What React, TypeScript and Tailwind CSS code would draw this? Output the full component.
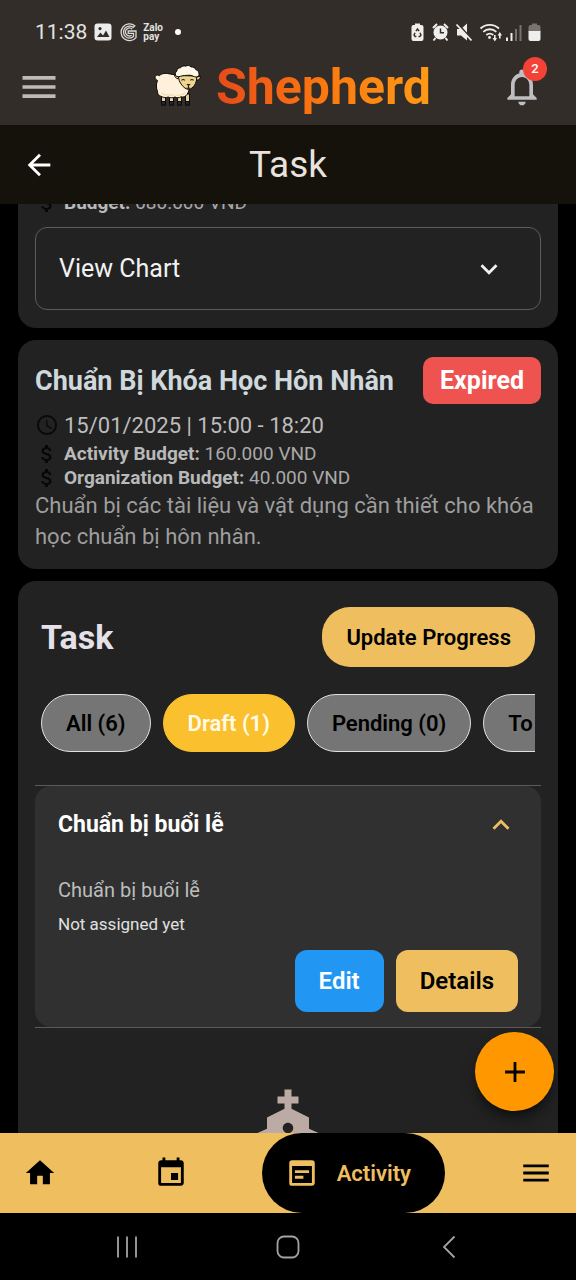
import type { ReactNode } from "react";
import {
  MdAccessTime,
  MdAdd,
  MdArrowBack,
  MdAttachMoney,
  MdChurch,
  MdEvent,
  MdExpandLess,
  MdExpandMore,
  MdHome,
  MdMenu,
  MdNotificationsNone,
  MdWysiwyg,
} from "react-icons/md";

function StatusBar() {
  return (
    <div className="flex h-[50px] items-end justify-between pr-[33px] pb-[6px] pl-[35px] text-[#e4e2e0]">
      <div className="flex h-6 items-center">
        <span className="text-[21px] leading-6">11:38</span>
        <svg className="ml-[7px] size-[18px]" viewBox="0 0 18 18">
          <rect x="0.5" y="0.5" width="17" height="17" rx="3" fill="#eeeceb" />
          <path d="M3 14l3.5-4.5 2.5 3 3-5 3.5 6.5z" fill="#322d28" />
          <circle cx="6" cy="5.6" r="1.6" fill="#322d28" />
        </svg>
        <svg className="ml-[7px] h-5 w-[18px]" viewBox="0 0 18 20" fill="none" stroke="#dcdad8" strokeWidth="1.3">
          <path d="M15.800 3.800A8.400 8.400 0 1 0 17 15.600V9H9.200v2.300h5.300v3.300a6 6 0 1 1-.3-9.200z" />
          <path d="M13.200 7.200a3.900 3.900 0 1 0-.6 6" />
        </svg>
        <span className="ml-[6px] flex flex-col text-[10px] leading-[9px] font-bold">
          <span>Zalo</span>
          <span>pay</span>
        </span>
        <span className="ml-3 size-[6px] rounded-full bg-white" />
      </div>
      <svg className="h-6 w-[132px]" viewBox="0 0 132 24" fill="#f0eeec">
        <path d="M4 3.5h5V5h1.500A2 2 0 0 1 12.500 7v12a2 2 0 0 1-2 2h-8a2 2 0 0 1-2-2V7a2 2 0 0 1 2-2H4z" />
        <g fill="none" stroke="#322d28" strokeWidth="1.400">
          <path d="M4.900 11.200l1.600-2.200 1.600 2.200M9 12.700l1 2.500-1.200 1.300H7.500M5.400 16.500H4.200L3 15.200l1-2.500" />
        </g>
        <circle cx="29.500" cy="12.500" r="7" />
        <path d="M22 8l4-4M37 8l-4-4M24.500 18l-2 2.500M34.500 18l2 2.500" stroke="#f0eeec" strokeWidth="2" />
        <path d="M29.500 8.500v4.300h3.500" fill="none" stroke="#322d28" strokeWidth="1.500" />
        <path d="M46 9h4l6-5.500v17L50 15.500h-4z" />
        <path d="M46.500 3.500l15 17" stroke="#322d28" strokeWidth="2" />
        <path d="M45.500 4.500l15 16" stroke="#f0eeec" strokeWidth="1.800" />
        <g fill="none" stroke="#f0eeec" strokeWidth="1.800">
          <path d="M69.500 8.500a13.500 13.500 0 0 1 18.500 0" />
          <path d="M72.300 11.800a9.500 9.500 0 0 1 13 0" />
          <path d="M75.300 15a5.500 5.500 0 0 1 7 0" />
        </g>
        <circle cx="78.500" cy="17.500" r="1.400" />
        <path d="M83 15h1.600v3h1.400l-2.200 3.500-2.200-3.500H83zM88 18.500h1.600v-3H91L88.800 12l-2.200 3.500H88z" />
        <path d="M95 17.500h2V21h-2zM99.500 13h2v8h-2z" />
        <path d="M104 9h2v12h-2zM108.500 5h2v16h-2z" fill="#77736f" />
        <path d="M121 3.500h5V5h1.500a2 2 0 0 1 2 2v5h-12V7a2 2 0 0 1 2-2h1.500z" fill="#77736f" />
        <path d="M117.500 11h12v8a2 2 0 0 1-2 2h-8a2 2 0 0 1-2-2z" />
      </svg>
    </div>
  );
}

function Sheep() {
  return (
    <svg className="h-[45px] w-[50px] shrink-0" viewBox="5 5 50 45">
      <g stroke="#0c0a0c" strokeWidth="1">
        <path d="M12.500 36h4v10h-4zM20.500 37h4v9h-4zM28.500 37h4v9h-4zM36.500 35h4v11h-4z" fill="#e6d092" />
        <path
          d="M12.500 42.500h4V46h-4zM20.500 42.500h4V46h-4zM28.500 42.500h4V46h-4zM36.500 42.500h4V46h-4z"
          fill="#262533"
        />
        <path
          d="M8.500 21.500c-2-.8-2.800-2.600-2.200-4.200.7-1.500 2.600-1.800 4-.6 2-2 5-2.700 8-2.200l9 1.500 13 8.500c.8 4-.2 8-2.300 11-1.500 2.200-4 3-6 2.300-2 1.200-4.300 1.200-6 .2-2 1-5 1-6.800 0-2 .8-4.800.8-6.700-.5-2.500-.4-4.200-2.600-4-5-1.400-3.500-1.500-7.500 0-11z"
          fill="#fdf1dc"
        />
        <path d="M31 17.500l-2.500-1.500-3-.2c.2 2 1.300 3.600 3.500 4zM47.500 18l4-.8c.2 2.400-1.500 4.200-4.300 4z" fill="#e9cf8a" />
        <path
          d="M29.500 16.500l17.800.5c.7 3.500 0 6.800-2 9.500-1.500 2-3.300 3.600-5.600 4-2.800-.4-5-2-6.700-4.300-2.400-2.600-3.600-6-3.500-9.700z"
          fill="#eed58e"
        />
        <path
          d="M27.500 17.500c-1.700-1.700-1.500-4.200.3-5.500.2-2 1.800-3.400 3.800-3.300 1.200-1.600 3.300-2.200 5-1.500 1.800-1.200 4.200-.8 5.500.7 2.200-.2 4 .9 4.600 2.600 2.200.7 3.600 2.800 3.300 5-.2 1.600-1.400 2.600-3 2.500-2.300-.2-3.600-1.400-5.300-1.700-2.300-.4-4 .2-6.200.2-2.800 0-5.200 1.800-8 1z"
          fill="#fff7e6"
        />
      </g>
      <path
        d="M12 33c4 3 8 2 11 2.500 5 1 9 .5 13.500-2.500-.4 2-2 3.600-4.500 3-2 1.400-4.500 1-6 .2-2.500 1.200-5 .8-7 0-3 .8-5.500.4-7-3.200z"
        fill="#f0dcb4"
      />
      <path
        d="M32.500 21.300c1-1 2.300-1 3.300 0M41.300 21.300c1-1 2.300-1 3.300 0M39.500 27v1.700M37.500 29c1.200.5 2.800.5 4 0"
        fill="none"
        stroke="#2b2116"
        strokeWidth="1.100"
      />
      <path d="M37.300 25h4.400l-2.200 2.200z" fill="#2b1c18" />
    </svg>
  );
}

function TopBar() {
  return (
    <header className="shrink-0 bg-[#322d28]">
      <StatusBar />
      <div className="flex h-[75px] items-center justify-between pr-8 pb-[2px] pl-[17px]">
        <button type="button" aria-label="Open menu" className="text-[#bdbab7]">
          <MdMenu className="size-11" />
        </button>
        <div className="flex items-center gap-3 pl-6">
          <Sheep />
          <span className="bg-linear-to-r from-[#e64a19] via-[#fb780f] to-[#ff9a16] bg-clip-text text-[50px] leading-[60px] font-bold text-transparent">
            Shepherd
          </span>
        </div>
        <button type="button" aria-label="Notifications" className="relative text-[#bfbfc1]">
          <MdNotificationsNone className="size-11" />
          <span className="absolute -top-2 -right-[3px] flex size-6 items-center justify-center rounded-full bg-[#f44336] text-[13px] leading-4 font-medium text-white">
            2
          </span>
        </button>
      </div>
    </header>
  );
}

function MoneyRow({ label, amount }: { label: string; amount: string }) {
  return (
    <div className="flex h-6 items-center gap-[5px] text-[19px] leading-6 text-[#a9a9a9]">
      <MdAttachMoney className="size-6 text-[#070707]" />
      <p>
        <strong className="font-bold text-[#b9b9b9]">{label}:</strong> {amount} VND
      </p>
    </div>
  );
}

function Card({ children, className }: { children: ReactNode; className: string }) {
  return <section className={`mx-[18px] bg-[#222222] ${className}`}>{children}</section>;
}

const filters = [
  { name: "All", count: 6 },
  { name: "Draft", count: 1 },
  { name: "Pending", count: 0 },
  { name: "To Do", count: 2 },
];

function Filters() {
  return (
    <div className="mt-[27px] flex gap-3 overflow-hidden">
      {filters.map((f) => (
        <button
          key={f.name}
          type="button"
          aria-pressed={f.name === "Draft"}
          className={
            f.name === "Draft"
              ? "h-[58px] shrink-0 rounded-full border border-[#fbc02d] bg-[#fbc02d] px-6 text-[22px] font-semibold text-[#fffbe8]"
              : "h-[58px] shrink-0 rounded-full border border-[#e0e0e0] bg-[#757575] px-6 text-[22px] font-semibold text-black"
          }
        >
          {f.name} ({f.count})
        </button>
      ))}
    </div>
  );
}

export default function App() {
  return (
    <div className="flex h-screen flex-col bg-black font-[Roboto,'Noto_Sans',sans-serif]">
      <TopBar />
      <div className="grid h-[79px] shrink-0 grid-cols-[1fr_auto_1fr] items-center bg-[#15110b] px-[22px]">
        <button type="button" aria-label="Back" className="justify-self-start text-white">
          <MdArrowBack className="size-[34px]" />
        </button>
        <h1 className="text-[37px] leading-[48px] text-[#e9e2dd]">Task</h1>
      </div>

      <div className="relative min-h-0 flex-1">
        <main className="h-full overflow-hidden">
          <Card className="-mt-[13px] rounded-b-[18px] px-[17px] pb-[18px]">
            <MoneyRow label="Budget" amount="680.000" />
            <button
              type="button"
              aria-expanded={false}
              className="mt-3 flex h-[83px] w-full items-center justify-between rounded-xl border border-[#5c5c5c] pr-[34px] pl-[23px] text-[25px] text-[#f2f2f2]"
            >
              View Chart
              <MdExpandMore className="size-[34px]" />
            </button>
          </Card>

          <Card className="mt-3 rounded-[18px] px-[17px] pt-[17px] pb-[17px]">
            <div className="flex items-center justify-between">
              <h2 className="text-[27px] leading-8 font-bold text-[#cfd8dc]">Chuẩn Bị Khóa Học Hôn Nhân</h2>
              <span className="rounded-[10px] bg-[#ef5350] px-[17px] py-2 text-[25px] leading-[31px] font-bold text-white">
                Expired
              </span>
            </div>
            <div className="mt-1 flex h-[34px] items-center gap-[5px] text-[22px] text-[#bdbdbd]">
              <MdAccessTime className="size-6 text-[#0a0a0a]" />
              <time dateTime="2025-01-15T15:00">15/01/2025 | 15:00 - 18:20</time>
            </div>
            <MoneyRow label="Activity Budget" amount="160.000" />
            <MoneyRow label="Organization Budget" amount="40.000" />
            <p className="text-[22px] leading-[31px] text-[#9e9e9e]">
              Chuẩn bị các tài liệu và vật dụng cần thiết cho khóa học chuẩn bị hôn nhân.
            </p>
          </Card>

          <Card className="mt-3 rounded-t-[18px] px-[17px] pt-[26px]">
            <div className="px-[6px]">
              <div className="flex items-center justify-between">
                <h2 className="text-[34px] leading-10 font-bold text-[#e6e1e9]">Task</h2>
                <button
                  type="button"
                  className="h-[60px] rounded-[28px] bg-[#efbf5f] px-6 text-[22px] font-semibold text-black"
                >
                  Update Progress
                </button>
              </div>
              <Filters />
            </div>

            <div className="mt-[33px] border-y border-[#5a5a5a]">
              <article className="rounded-2xl bg-[#303030] px-[23px] pb-[15px]">
                <button
                  type="button"
                  aria-expanded={true}
                  className="flex h-[78px] w-full items-center justify-between text-[23px] font-bold text-white"
                >
                  Chuẩn bị buổi lễ
                  <MdExpandLess className="size-[34px] text-[#efbf5f]" />
                </button>
                <p className="pt-3 text-[20px] leading-7 text-[#bdbdbd]">Chuẩn bị buổi lễ</p>
                <p className="mt-2 text-[17px] leading-6 text-[#e0e0e0]">Not assigned yet</p>
                <div className="mt-[14px] flex justify-end gap-3">
                  <button
                    type="button"
                    className="h-[62px] rounded-xl bg-[#2196f3] px-6 text-[24px] font-semibold text-white"
                  >
                    Edit
                  </button>
                  <button
                    type="button"
                    className="h-[62px] rounded-xl bg-[#efbf5f] px-6 text-[24px] font-semibold text-black"
                  >
                    Details
                  </button>
                </div>
              </article>
            </div>

            <MdChurch className="mx-auto mt-[58px] size-[84px] text-[#bcaaa4]" />
          </Card>
        </main>
        <button
          type="button"
          aria-label="Add task"
          className="absolute right-[22px] bottom-[22px] flex size-[79px] items-center justify-center rounded-full bg-[#ff9800] text-black shadow-lg shadow-black/50"
        >
          <MdAdd className="size-[34px]" />
        </button>
      </div>

      <nav className="flex h-20 shrink-0 items-center bg-[#efbf5f] text-black">
        <a href="#home" aria-label="Home" className="flex w-20 justify-center">
          <MdHome className="size-[34px]" />
        </a>
        <a href="#calendar" aria-label="Calendar" className="flex flex-1 justify-center">
          <MdEvent className="size-[34px]" />
        </a>
        <a
          href="#activity"
          aria-current="page"
          className="flex h-20 items-center gap-[18px] rounded-full bg-black pr-[34px] pl-[23px] text-[22px] font-semibold text-[#efbf5f]"
        >
          <MdWysiwyg className="size-[34px]" />
          Activity
        </a>
        <a href="#more" aria-label="More" className="flex w-[131px] justify-end pr-[23px]">
          <MdMenu className="size-[34px]" />
        </a>
      </nav>

      <div className="grid h-[67px] shrink-0 grid-cols-3 place-items-center bg-black px-[46px]">
        <button type="button" aria-label="Recent apps">
          <svg className="size-6" viewBox="0 0 24 24" fill="none" stroke="#a3a3a3" strokeWidth="1.800">
            <path d="M3 1.500v21M12 1.500v21M21 1.500v21" />
          </svg>
        </button>
        <button type="button" aria-label="Home screen">
          <svg className="size-6" viewBox="0 0 24 24" fill="none" stroke="#a3a3a3" strokeWidth="1.800">
            <rect x="1.500" y="1.500" width="21" height="21" rx="6.500" />
          </svg>
        </button>
        <button type="button" aria-label="System back">
          <svg className="size-6" viewBox="0 0 24 24" fill="none" stroke="#a3a3a3" strokeWidth="1.800">
            <path d="M17.500 1.500L7 12l10.500 10.500" />
          </svg>
        </button>
      </div>
    </div>
  );
}
